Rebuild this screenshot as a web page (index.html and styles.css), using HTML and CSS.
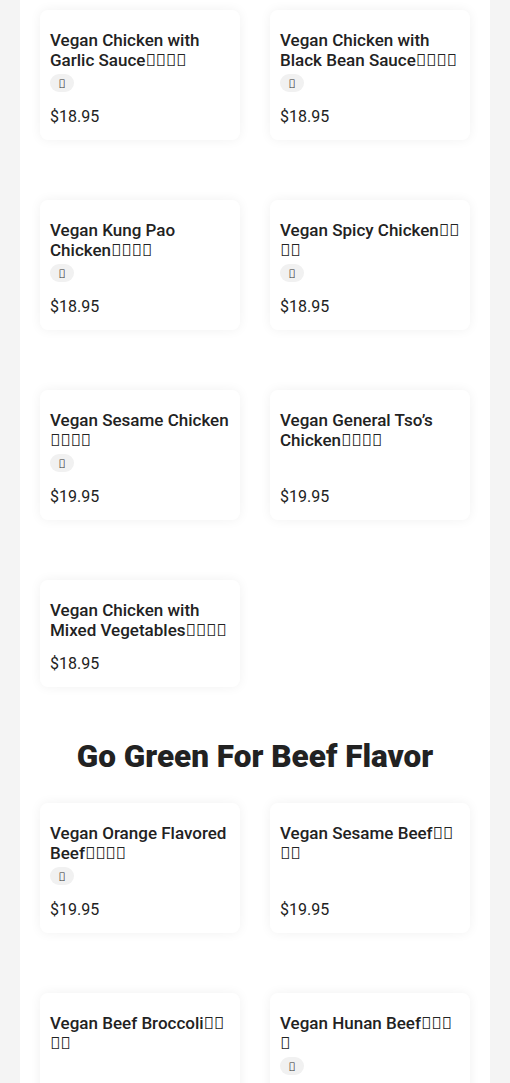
FILE: index.html
```html
<!DOCTYPE html>
<html lang="en">
<head>
<meta charset="utf-8">
<title>Menu</title>
<link rel="stylesheet" href="styles.css">
</head>
<body>
<main class="panel">
  <section class="grid">
    <article class="card">
      <h3 class="name">Vegan Chicken with Garlic Sauce<span class="cjk">&#x2FFF0;&#x2FFF1;&#x2FFF2;&#x2FFF3;</span></h3>
      <div class="tags"><span class="tag">&#x2FFF9;</span></div>
      <p class="price">$18.95</p>
    </article>
    <article class="card">
      <h3 class="name">Vegan Chicken with Black Bean Sauce<span class="cjk">&#x2FFF0;&#x2FFF1;&#x2FFF2;&#x2FFF3;</span></h3>
      <div class="tags"><span class="tag">&#x2FFF9;</span></div>
      <p class="price">$18.95</p>
    </article>
    <article class="card">
      <h3 class="name">Vegan Kung Pao Chicken<span class="cjk">&#x2FFF0;&#x2FFF1;&#x2FFF2;&#x2FFF3;</span></h3>
      <div class="tags"><span class="tag">&#x2FFF9;</span></div>
      <p class="price">$18.95</p>
    </article>
    <article class="card">
      <h3 class="name">Vegan Spicy Chicken<span class="cjk">&#x2FFF0;&#x2FFF1;&#x2FFF2;&#x2FFF3;</span></h3>
      <div class="tags"><span class="tag">&#x2FFF9;</span></div>
      <p class="price">$18.95</p>
    </article>
    <article class="card">
      <h3 class="name">Vegan Sesame Chicken<span class="cjk">&#x2FFF0;&#x2FFF1;&#x2FFF2;&#x2FFF3;</span></h3>
      <div class="tags"><span class="tag">&#x2FFF9;</span></div>
      <p class="price">$19.95</p>
    </article>
    <article class="card">
      <h3 class="name">Vegan General Tso’s Chicken<span class="cjk">&#x2FFF0;&#x2FFF1;&#x2FFF2;&#x2FFF3;</span></h3>
      <p class="price">$19.95</p>
    </article>
    <article class="card">
      <h3 class="name">Vegan Chicken with Mixed Vegetables<span class="cjk">&#x2FFF0;&#x2FFF1;&#x2FFF2;&#x2FFF3;</span></h3>
      <p class="price">$18.95</p>
    </article>
  </section>

  <h2 class="section-title">Go Green For Beef Flavor</h2>

  <section class="grid">
    <article class="card">
      <h3 class="name">Vegan Orange Flavored Beef<span class="cjk">&#x2FFF0;&#x2FFF1;&#x2FFF2;&#x2FFF3;</span></h3>
      <div class="tags"><span class="tag">&#x2FFF9;</span></div>
      <p class="price">$19.95</p>
    </article>
    <article class="card">
      <h3 class="name">Vegan Sesame Beef<span class="cjk">&#x2FFF0;&#x2FFF1;&#x2FFF2;&#x2FFF3;</span></h3>
      <p class="price">$19.95</p>
    </article>
    <article class="card">
      <h3 class="name">Vegan Beef Broccoli<span class="cjk">&#x2FFF0;&#x2FFF1;&#x2FFF2;&#x2FFF3;</span></h3>
      <p class="price">$18.95</p>
    </article>
    <article class="card">
      <h3 class="name">Vegan Hunan Beef<span class="cjk">&#x2FFF0;&#x2FFF1;&#x2FFF2;&#x2FFF3;</span></h3>
      <div class="tags"><span class="tag">&#x2FFF9;</span></div>
      <p class="price">$19.95</p>
    </article>
  </section>
</main>
</body>
</html>
```

FILE: styles.css
```css
* { box-sizing: border-box; }

html, body {
  margin: 0;
  padding: 0;
  background: #f4f4f4;
  font-family: "Roboto", "Liberation Sans", sans-serif;
  color: #222222;
}

.panel {
  width: 470px;
  margin: 0 auto;
  background: #ffffff;
  padding: 10px 20px 40px;
  min-height: 1083px;
}

.grid {
  display: grid;
  grid-template-columns: 200px 200px;
  column-gap: 30px;
  row-gap: 60px;
  align-items: stretch;
}

.card {
  background: #ffffff;
  border-radius: 8px;
  box-shadow: 0 0 12px rgba(0, 0, 0, 0.06);
  padding: 20px 10px 11px;
  display: flex;
  flex-direction: column;
}

.name {
  margin: 0;
  font-size: 17px;
  line-height: 20px;
  font-weight: 500;
  color: #222222;
}

.cjk {
  font-family: "Noto Sans", sans-serif;
  font-weight: 400;
  color: #222222;
}

.tags {
  display: flex;
  margin: 4px 0 1px;
}

.tag {
  display: inline-flex;
  align-items: center;
  justify-content: center;
  height: 18px;
  min-width: 24px;
  padding: 0 6px;
  border-radius: 9px;
  background: #f1f1f1;
  font-family: "Noto Sans", sans-serif;
  font-size: 12px;
  color: #333333;
}

.price {
  margin: auto 0 0;
  padding-top: 12px;
  font-size: 16px;
  line-height: 24px;
  font-weight: 400;
}

.section-title {
  margin: 52px 0 28px;
  text-align: center;
  font-size: 31.5px;
  line-height: 36px;
  font-weight: 900;
  color: #222222;
}
```
